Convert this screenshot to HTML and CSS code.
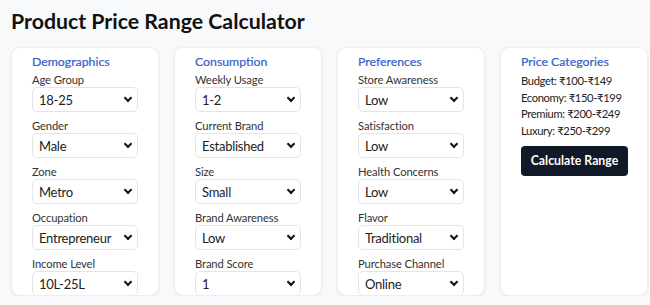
FILE: index.html
```html
<!DOCTYPE html>
<html>
<head>
<meta charset="utf-8">
<link rel="stylesheet" href="styles.css">
</head>
<body>
<h1 class="title">Product Price Range Calculator</h1>
<div class="grid">
  <div class="card">
    <h2 class="card-title">Demographics</h2>
    <div class="field"><label class="label">Age Group</label><div class="select-wrap"><select class="select"><option>18-25</option></select></div></div>
    <div class="field"><label class="label">Gender</label><div class="select-wrap"><select class="select"><option>Male</option></select></div></div>
    <div class="field"><label class="label">Zone</label><div class="select-wrap"><select class="select"><option>Metro</option></select></div></div>
    <div class="field"><label class="label">Occupation</label><div class="select-wrap"><select class="select"><option>Entrepreneur</option></select></div></div>
    <div class="field"><label class="label">Income Level</label><div class="select-wrap"><select class="select"><option>10L-25L</option></select></div></div>
  </div>
  <div class="card">
    <h2 class="card-title">Consumption</h2>
    <div class="field"><label class="label">Weekly Usage</label><div class="select-wrap"><select class="select"><option>1-2</option></select></div></div>
    <div class="field"><label class="label">Current Brand</label><div class="select-wrap"><select class="select"><option>Established</option></select></div></div>
    <div class="field"><label class="label">Size</label><div class="select-wrap"><select class="select"><option>Small</option></select></div></div>
    <div class="field"><label class="label">Brand Awareness</label><div class="select-wrap"><select class="select"><option>Low</option></select></div></div>
    <div class="field"><label class="label">Brand Score</label><div class="select-wrap"><select class="select"><option>1</option></select></div></div>
  </div>
  <div class="card">
    <h2 class="card-title">Preferences</h2>
    <div class="field"><label class="label">Store Awareness</label><div class="select-wrap"><select class="select"><option>Low</option></select></div></div>
    <div class="field"><label class="label">Satisfaction</label><div class="select-wrap"><select class="select"><option>Low</option></select></div></div>
    <div class="field"><label class="label">Health Concerns</label><div class="select-wrap"><select class="select"><option>Low</option></select></div></div>
    <div class="field"><label class="label">Flavor</label><div class="select-wrap"><select class="select"><option>Traditional</option></select></div></div>
    <div class="field"><label class="label">Purchase Channel</label><div class="select-wrap"><select class="select"><option>Online</option></select></div></div>
  </div>
  <div class="card">
    <h2 class="card-title">Price Categories</h2>
    <div class="prices">
      <p class="price">Budget: ₹100-₹149</p>
      <p class="price">Economy: ₹150-₹199</p>
      <p class="price">Premium: ₹200-₹249</p>
      <p class="price">Luxury: ₹250-₹299</p>
    </div>
    <button class="btn">Calculate Range</button>
  </div>
</div>
</body>
</html>
```
FILE: styles.css
```css
* { box-sizing: border-box; }
html, body { margin: 0; padding: 0; }
body {
  background: #f8f9fb;
  font-family: "Lato", "Noto Sans", sans-serif;
  color: #222;
  padding: 8px 0 0 11px;
  overflow: hidden;
}
.title {
  margin: 0 0 12px 0;
  font-size: 21.3px;
  font-weight: 700;
  color: #111;
  line-height: 27px;
}
.grid {
  display: grid;
  grid-template-columns: repeat(4, 148px);
  gap: 15px;
}
.card {
  background: #fff;
  border: 1px solid #eceef1;
  border-radius: 9px;
  box-shadow: 0 1px 3px rgba(0,0,0,0.08);
  height: 249px;
  overflow: hidden;
  padding: 5px 20px 0 20px;
}
.card-title {
  margin: 0 0 2px 0;
  font-size: 12.3px;
  font-weight: 400;
  color: #3560c8;
  line-height: 17px;
  -webkit-text-stroke: 0.2px #3560c8;
}
.field { margin-bottom: 6px; }
.label {
  display: block;
  font-size: 11.2px;
  letter-spacing: -0.1px;
  color: #333;
  line-height: 15px;
  white-space: nowrap;
}
.select-wrap { position: relative; }
.select-wrap::after {
  content: "";
  position: absolute;
  right: 7px;
  top: 8px;
  width: 4px;
  height: 4px;
  border-right: 2px solid #111;
  border-bottom: 2px solid #111;
  transform: rotate(45deg);
  pointer-events: none;
}
.select {
  appearance: none;
  -webkit-appearance: none;
  width: 100%;
  height: 25px;
  border: 1px solid #e2e4e8;
  border-radius: 5px;
  background: #fff;
  font-family: inherit;
  font-size: 13px;
  letter-spacing: -0.25px;
  color: #222;
  padding: 0 6px;
}
.prices { margin-top: 3px; }
.price {
  margin: 0;
  font-size: 11.2px;
  letter-spacing: -0.35px;
  line-height: 16.7px;
  color: #222;
  white-space: nowrap;
}
.btn {
  margin-top: 6px;
  width: 107px;
  height: 30px;
  border: none;
  border-radius: 4px;
  background: #111827;
  color: #fff;
  font-family: inherit;
  font-size: 12.3px;
  font-weight: 700;
  white-space: nowrap;
  padding: 0;
}
```
